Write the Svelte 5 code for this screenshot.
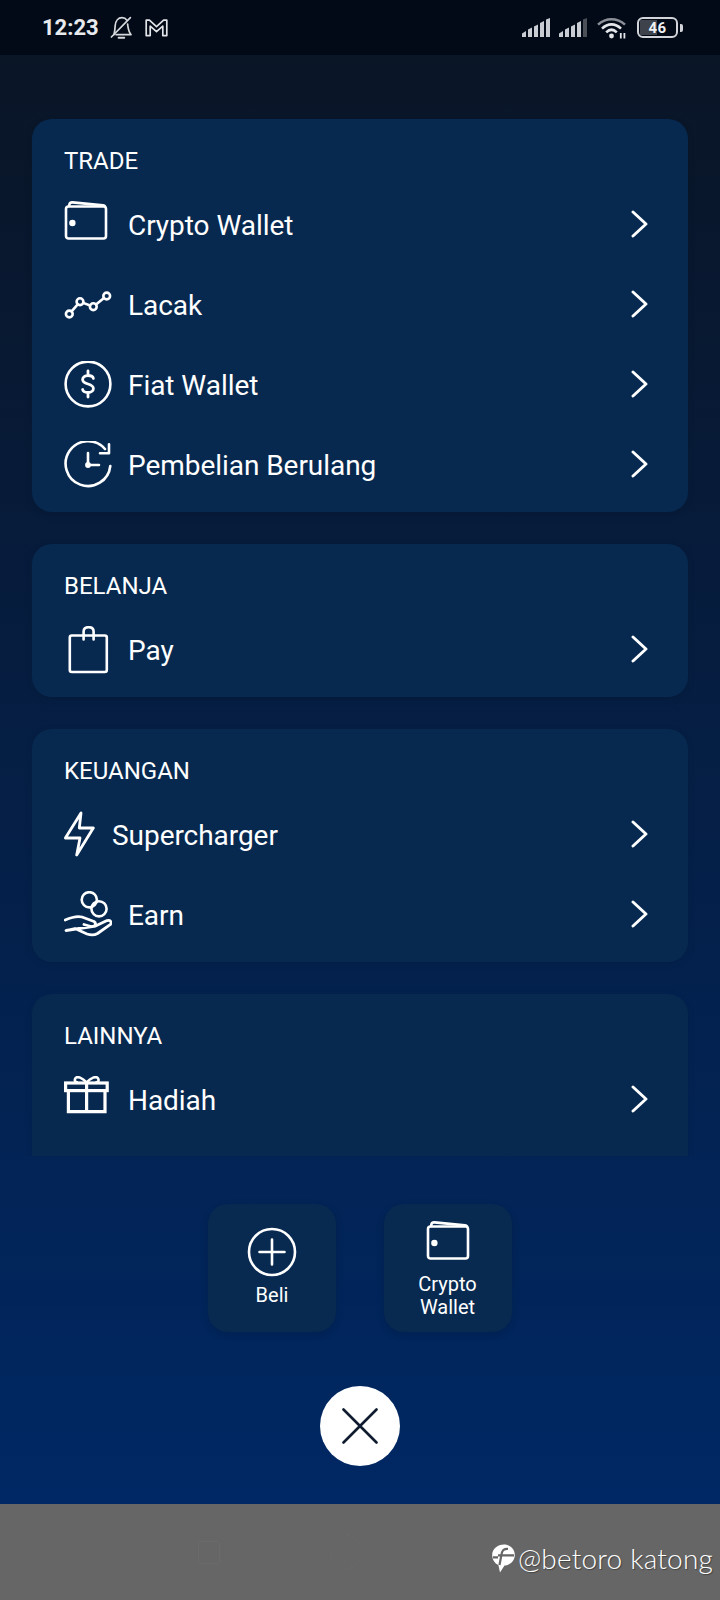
<script>
  const sections = [
    { title: 'TRADE', rows: [
      { label: 'Crypto Wallet', icon: 'wallet' },
      { label: 'Lacak', icon: 'track' },
      { label: 'Fiat Wallet', icon: 'dollar' },
      { label: 'Pembelian Berulang', icon: 'clock' }
    ]},
    { title: 'BELANJA', rows: [{ label: 'Pay', icon: 'bag' }] },
    { title: 'KEUANGAN', rows: [
      { label: 'Supercharger', icon: 'bolt', narrow: true },
      { label: 'Earn', icon: 'earn' }
    ]},
    { title: 'LAINNYA', rows: [{ label: 'Hadiah', icon: 'gift' }] }
  ];
</script>

{#snippet icon(name)}
  <svg class="ico" width="48" height="48" viewBox="0 0 48 48" fill="none" stroke="#fff" stroke-width="2.6" stroke-linecap="round" stroke-linejoin="round">
    {#if name === 'wallet'}
      <rect x="2" y="5.5" width="40" height="32" rx="2.5" />
      <path d="M5 5 L5.5 3.2 Q6 1.2 8.5 1.4 L39 4.4 Q40.5 4.6 41 5.5" />
      <circle cx="8.4" cy="22" r="3.2" fill="#fff" stroke="none" />
    {:else if name === 'track'}
      <circle cx="5.3" cy="33" r="3.4" />
      <circle cx="16" cy="20.7" r="3.4" />
      <circle cx="29.3" cy="25.7" r="3.4" />
      <circle cx="42.7" cy="15" r="3.4" />
      <path d="M7.6 30.4 L13.7 23.3 M19.2 21.9 L26.1 24.5 M32 23.6 L40 17.1" />
    {:else if name === 'dollar'}
      <circle cx="24" cy="23" r="22.4" />
      <path d="M29.4 17.5 C29 15.5 27 14.5 24 14.5 C20.4 14.5 18.6 16.5 18.6 18.5 C18.6 21 20.5 22 24 23 C27.5 24 29.4 25 29.4 27.5 C29.4 29.5 27.5 31.5 24 31.5 C21 31.5 19 30.5 18.6 28.5 M24 10 V14.5 M24 31.5 V36" stroke-width="2.8" />
    {:else if name === 'clock'}
      <path d="M41 8 A22.4 22.4 0 1 0 46.3 25" />
      <path d="M36 12.2 H45 V3.2" />
      <path d="M24 12 V24 H35" />
      <circle cx="24" cy="24" r="2.9" fill="#fff" stroke="none" />
    {:else if name === 'bag'}
      <rect x="5.8" y="9.5" width="37" height="36.5" rx="2" />
      <path d="M19.6 13.5 V5.5 Q19.6 1.2 24.6 1.2 Q29.6 1.2 29.6 5.5 V13.5" />
    {:else if name === 'bolt'}
      <path d="M17 2 L1.4 27 H16 L12.7 44 L29.3 17 H15.3 Z" stroke-width="2.8" />
    {:else if name === 'earn'}
      <circle cx="25.3" cy="8.8" r="7.6" />
      <circle cx="35" cy="17.8" r="7.6" />
      <path d="M1.2 29 C8 26 14 25 18 26 L30 30.5 C33 32.5 30.5 36.5 27 35.5 L20 33.5 M31.5 35 L43 29.6 C46.5 28.8 48 31 46.5 33.4 L33.5 42.5 C29.5 44.8 26 44 23 43 L11 37.5 L2 39.5 Z" stroke-width="2.8" />
    {:else if name === 'gift'}
      <g stroke-width="3.2" stroke-linecap="butt" stroke-linejoin="miter">
        <rect x="1.6" y="7" width="41.6" height="7.6" />
        <path d="M4.4 14.6 V35.6 H41 V14.6 M22.6 7 V35.6" />
        <path d="M22.6 6.4 C18 1.6 13.4 0 11.6 2 C10 4.2 11 6.4 14 6.6 M22.6 6.4 C27 1.6 32 0 33.8 2 C35.4 4.2 34.4 6.4 31.4 6.6" stroke-width="2.6" />
      </g>
    {/if}
  </svg>
{/snippet}

<div class="screen">
  <header class="status">
    <div class="st-left">
      <span class="time">12:23</span>
      <svg width="23" height="24" viewBox="0 0 23 24" fill="none" stroke="#d6d8dc" stroke-width="1.7" stroke-linejoin="round" stroke-linecap="round">
        <path d="M1.4 21 L20.4 1.6" />
        <path d="M4 18.6 C4.6 16 5 13 5.2 9.6 C5.6 4.6 8.4 1.6 12 1.6 C14.2 1.6 15.8 2.6 17 4.2 M17.6 8 C18 12 18.6 16 21 18.6 H6" />
        <path d="M8.6 21.8 H14.2" stroke-width="2" />
      </svg>
      <svg width="23" height="18" viewBox="0 0 23 18" fill="none" stroke="#e2e4e8" stroke-width="1.7" stroke-linejoin="round">
        <path d="M1.2 1.2 H4.4 L11.5 7.6 L18.6 1.2 H21.8 V16.6 H17.8 V7.2 L11.5 12.6 L5.2 7.2 V16.6 H1.2 Z" />
      </svg>
    </div>
    <div class="st-right">
      <svg width="28" height="20" viewBox="0 0 28 20" fill="#c9ccd2">
        <path d="M0 15.5 L4 13 V19 H0 Z M6 11.5 L10 9.5 V19 H6 Z M12 8.5 L16 6.5 V19 H12 Z M18 5 L22 3 V19 H18 Z M24 1.5 L28 0 V19 H24 Z" />
      </svg>
      <svg width="28" height="20" viewBox="0 0 28 20" fill="#c9ccd2">
        <path d="M0 15.5 L4 13 V19 H0 Z M6 11.5 L10 9.5 V19 H6 Z M12 8.5 L16 6.5 V19 H12 Z M18 5 L22 3 V19 H18 Z" />
        <path d="M24 1.5 L28 0 V19 H24 Z" fill="#4a4f58" />
      </svg>
      <svg class="wifi" width="30" height="22" viewBox="0 0 30 22" fill="none" stroke="#e4e6ea" stroke-width="2.6" stroke-linecap="butt">
        <path d="M1 7.6 C9 .4 20 .4 28 7.6" stroke="#8b8f97" />
        <path d="M5 11.6 C10.8 6 18.2 6 24 11.6" />
        <path d="M9.2 15.4 C12.6 12 16.4 12 19.8 15.4" />
        <circle cx="14.5" cy="19" r="2.4" fill="#e4e6ea" stroke="none" />
        <path d="M23.8 16 V21.6 M27.4 16 V21.6" stroke-width="1.8" />
      </svg>
      <div class="battery">
        <div class="batt-body"><span class="batt-fill"></span><span class="batt-num">46</span></div>
        <span class="batt-nub"></span>
      </div>
    </div>
  </header>

  <main class="scroll">
    {#each sections as s}
      <section class="card">
        <h2>{s.title}</h2>
        {#each s.rows as r}
          <div class="row">
            <span class="ico-box" class:narrow={r.narrow}>{@render icon(r.icon)}</span>
            <span class="label">{r.label}</span>
            <svg class="chev" width="18" height="28" viewBox="0 0 18 28" fill="none" stroke="#fff" stroke-width="2.9" stroke-linecap="round" stroke-linejoin="round">
              <path d="M2 2 L15 14 L2 26" />
            </svg>
          </div>
        {/each}
      </section>
    {/each}
  </main>

  <div class="actions">
    <button class="action">
      <svg width="50" height="50" viewBox="0 0 50 50" fill="none" stroke="#fff" stroke-width="2.6" stroke-linecap="round">
        <circle cx="25" cy="25" r="23" />
        <path d="M25 12.5 V37.5 M12.5 25 H37.5" />
      </svg>
      <span>Beli</span>
    </button>
    <button class="action">
      {@render icon('wallet')}
      <span class="two">Crypto<br />Wallet</span>
    </button>
  </div>

  <div class="close-wrap">
    <button class="close" aria-label="Tutup">
      <svg width="36" height="36" viewBox="0 0 36 36" fill="none" stroke="#0f1b2e" stroke-width="2.6" stroke-linecap="round">
        <path d="M1.5 1.5 L34.5 34.5 M34.5 1.5 L1.5 34.5" />
      </svg>
    </button>
  </div>

  <footer class="nav">
    <span class="nav-square"></span>
    <span class="nav-circle"></span>
    <div class="mark">
      <svg width="23" height="29" viewBox="0 0 23 29">
        <path fill="#fff" d="M12 0.5 C18 0.5 22.8 5 22.8 11 C22.8 17 18 21 12.5 21.5 L8 28.5 L6.4 21 C2.6 19.4 0.2 15.6 0.2 11 C0.2 5 5.6 0.5 12 0.5 Z" />
        <path fill="none" stroke="#666" stroke-width="2.2" d="M7.5 21 L9.8 9 C10.4 6 12.6 4.6 16 4.8 M6 11.4 H22 M1 13.4 H6" />
      </svg>
      <span>@betoro katong</span>
    </div>
  </footer>
</div>

<style>
  :global(body) { margin: 0; }
  .screen {
    width: 720px;
    height: 1600px;
    display: flex;
    flex-direction: column;
    position: relative;
    overflow: hidden;
    font-family: Roboto, "Liberation Sans", sans-serif;
    color: #fff;
    background: linear-gradient(180deg, #0a1526 0, #0a1526 55px, #002864 1504px);
  }
  .status {
    height: 55px;
    flex: none;
    box-sizing: border-box;
    background: #020a17;
    display: flex;
    align-items: center;
    justify-content: space-between;
    padding: 0 37px 0 42px;
  }
  .st-left { display: flex; align-items: center; gap: 12px; }
  .st-right { display: flex; align-items: center; gap: 9px; }
  .wifi { margin: 0 1px; }
  .time { font-size: 22px; font-weight: 700; color: #e8eaee; width: 56px; }
  .battery { display: flex; align-items: center; gap: 2px; }
  .batt-body {
    width: 41px; height: 21px; box-sizing: border-box;
    border: 2.4px solid #d2d4d9; border-radius: 6px;
    display: flex; align-items: center; justify-content: center;
    position: relative; overflow: hidden;
  }
  .batt-fill { position: absolute; left: 1px; top: 1px; bottom: 1px; width: 17px; background: #3d424b; }
  .batt-num { position: relative; font-size: 15px; font-weight: 700; color: #f0f1f3; letter-spacing: .5px; }
  .batt-nub { width: 3px; height: 8px; background: #d2d4d9; border-radius: 0 2px 2px 0; }

  .scroll {
    height: 1101px;
    flex: none;
    box-sizing: border-box;
    overflow: hidden;
    padding: 64px 32px 0;
    display: flex;
    flex-direction: column;
    gap: 32px;
  }
  .card {
    flex: none;
    background: #072950;
    border-radius: 20px;
    padding: 0 0 7px;
    box-shadow: 0 2px 8px rgba(0, 0, 0, .08);
  }
  .card:last-child { padding-bottom: 60px; }
  h2 {
    margin: 0;
    height: 66px;
    box-sizing: border-box;
    padding: 29px 0 0 32px;
    font-size: 24px;
    line-height: 26px;
    font-weight: 400;
    color: #fff;
  }
  .row { height: 80px; display: flex; align-items: center; padding: 0 39px 0 32px; }
  .ico-box { width: 64px; flex: none; display: flex; align-items: center; }
  .ico-box.narrow { width: 48px; }
  .ico { display: block; }
  .label { flex: 1; font-size: 28px; line-height: 32px; color: #fff; padding-top: 1px; letter-spacing: -.05px; }
  .chev { flex: none; margin-top: -2px; }

  .actions {
    height: 176px;
    flex: none;
    box-sizing: border-box;
    padding-top: 48px;
    display: flex;
    justify-content: center;
    gap: 48px;
  }
  .action {
    width: 128px;
    height: 128px;
    border: 0;
    border-radius: 20px;
    background: #082a50;
    color: #fff;
    box-shadow: 0 3px 8px rgba(0, 0, 0, .14);
    font: 400 20px/23px Roboto, "Liberation Sans", sans-serif;
    display: flex;
    flex-direction: column;
    align-items: center;
    padding: 23px 0 0;
  }
  .action .ico { margin: -6px 0 0 4px; }
  .action span { display: block; margin-top: 7px; }
  .action span.two { margin-top: 4px; margin-left: -1px; }
  .close-wrap { height: 172px; flex: none; display: flex; justify-content: center; padding-top: 54px; box-sizing: border-box; }
  .close {
    width: 80px; height: 80px; padding: 0; border: 0; border-radius: 50%;
    background: #fff; display: flex; align-items: center; justify-content: center;
  }
  .nav {
    flex: 1;
    background: #666;
    position: relative;
    display: flex;
    align-items: center;
    padding-left: 198px;
    gap: 110px;
  }
  .nav-square { width: 20px; height: 21px; border: 1.5px solid #6a6a6a; border-radius: 2px; }
  .nav-circle { width: 30px; height: 32px; border: 1.5px dashed #6a6a6a; border-radius: 50%; }
  .mark {
    position: absolute;
    right: 7px;
    top: 37px;
    display: flex;
    align-items: center;
    gap: 3px;
  }
  .mark span {
    font: 300 28px/34px Lato, Roboto, sans-serif;
    letter-spacing: .2px;
    color: #fff;
    text-shadow: 1px 1px 1px rgba(0, 0, 0, .35);
    white-space: nowrap;
  }
</style>
